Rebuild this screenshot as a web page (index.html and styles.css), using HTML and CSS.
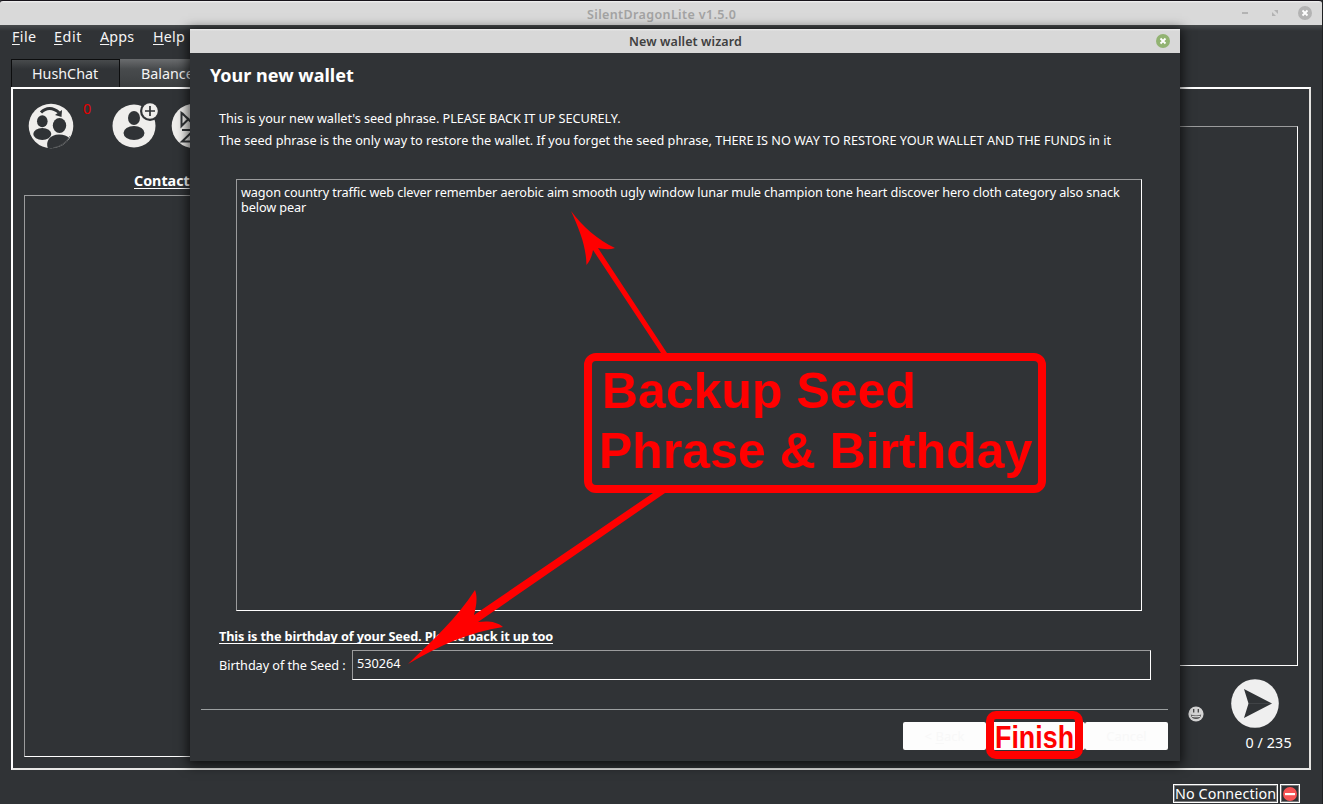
FILE: index.html
```
<!DOCTYPE html>
<html lang="en">
<head>
<meta charset="utf-8">
<title>SilentDragonLite v1.5.0</title>
<link rel="stylesheet" href="styles.css">
</head>
<body>
<div class="desktop">
  <div class="app">
    <header class="titlebar">
      <span class="app-title">SilentDragonLite v1.5.0</span>
      <svg class="win-controls" width="80" height="16" viewBox="0 0 80 16">
        <rect x="10" y="7" width="6" height="2" fill="#b3b3b3"/>
        <path d="M42 5h4v4zM40 7v4h4z" fill="#b3b3b3"/>
        <circle cx="73" cy="8" r="7" fill="#b3b3b3"/>
        <path d="M70.5 5.500l5 5m0-5l-5 5" stroke="#fff" stroke-width="1.800"/>
      </svg>
    </header>
    <nav class="menu">
      <span class="m-file"><u>F</u>ile</span>
      <span class="m-edit"><u>E</u>dit</span>
      <span class="m-apps"><u>A</u>pps</span>
      <span class="m-help"><u>H</u>elp</span>
    </nav>
    <div class="tabs">
      <div class="tab active">HushChat</div>
      <div class="tab second">Balance</div>
    </div>
    <main class="panel">
      <section class="contacts">
        <div class="tools">
          <svg class="ico-group" width="46" height="46" viewBox="0 0 46 46">
            <defs><clipPath id="disc"><circle cx="23" cy="23" r="22.300"/></clipPath></defs>
            <circle cx="23" cy="23" r="22.300" fill="#efeeec"/>
            <g clip-path="url(#disc)" fill="#303336">
              <ellipse cx="14.300" cy="18.300" rx="5.300" ry="6"/>
              <ellipse cx="14.300" cy="31" rx="9" ry="6"/>
              <ellipse cx="31.500" cy="22.500" rx="9" ry="9.500" fill="#efeeec"/>
              <ellipse cx="31.500" cy="22.500" rx="6.700" ry="7.600"/>
              <path d="M20 46c-3-8 2-14.500 11-14.500 5 0 8 1.500 10 3.500L36 46z"/>
            </g>
            <path d="M42 33Q36 43 25 45" fill="none" stroke="#5c5e60" stroke-width=".8"/>
            <path d="M13 9.500C18 4 25 4 31 9.500" fill="none" stroke="#303336" stroke-width="3"/>
            <path d="M27 12l7-5-.5 7z" fill="#303336"/>
          </svg>
          <span class="badge">0</span>
          <svg class="ico-add" width="48" height="48" viewBox="0 0 48 48">
            <circle cx="22" cy="25" r="21.500" fill="#efeeec"/>
            <ellipse cx="22" cy="17" rx="6" ry="7" fill="#303336"/>
            <ellipse cx="22" cy="32" rx="10.500" ry="7" fill="#303336"/>
            <circle cx="38" cy="10" r="10" fill="#303336"/>
            <circle cx="38" cy="10" r="7.800" fill="#efeeec"/>
            <path d="M38 5v10m-5-5h10" stroke="#303336" stroke-width="1.700"/>
          </svg>
          <svg class="ico-wait" width="46" height="46" viewBox="0 0 46 46">
            <circle cx="23" cy="23" r="22.300" fill="#efeeec"/>
            <path d="M10.500 10v13l7-7zM11 10l12 12M11 27h12L11 38.500h12" fill="none" stroke="#303336" stroke-width="2"/>
          </svg>
        </div>
        <h2 class="contact-title">Contact</h2>
        <div class="contact-list"></div>
      </section>
      <section class="chat">
        <div class="chat-log"></div>
        <div class="compose">
          <svg class="emoji" width="16" height="16" viewBox="0 0 16 16">
            <circle cx="8" cy="8" r="7.600" fill="#d4d4d4"/>
            <path d="M5.700 3v3.500m4.600-3.500v3.500" stroke="#444" stroke-width="1.300"/>
            <path d="M2.800 8.500q5.200 2.200 10.400 0-.7 4.500-5.200 4.500t-5.200-4.500z" fill="#555"/>
            <path d="M4 9.700q4 1.300 8 0v1q-4 1.200-8 0z" fill="#eee"/>
          </svg>
          <div class="send-box">
            <svg width="48" height="49" viewBox="0 0 48 49">
              <ellipse cx="24" cy="24.500" rx="23.800" ry="24.300" fill="#efefef"/>
              <path d="M13 10l28 14.500L13 39l4.500-14.500z" fill="#303336"/>
              <path d="M18 24.500h22" stroke="#484b4e" stroke-width=".7"/>
            </svg>
            <span class="count">0 / 235</span>
          </div>
        </div>
      </section>
    </main>
    <footer class="status">
      <span class="conn">No Connection</span>
      <span class="conn-ico"><svg width="14" height="14" viewBox="0 0 14 14"><circle cx="7" cy="7" r="7" fill="#f65355"/><rect x="2" y="6" width="10" height="2.200" fill="#fff"/></svg></span>
    </footer>
  </div>

  <div class="dialog">
    <header class="dialog-bar">
      <span class="dialog-title">New wallet wizard</span>
      <svg class="dialog-close" width="14" height="14" viewBox="0 0 14 14"><circle cx="7" cy="7" r="7" fill="#92b372"/><path d="M4.500 4.500l5 5m0-5l-5 5" stroke="#fff" stroke-width="1.800"/></svg>
    </header>
    <div class="dialog-body">
      <h1 class="heading">Your new wallet</h1>
      <p class="line first">This is your new wallet's seed phrase. PLEASE BACK IT UP SECURELY.</p>
      <p class="line second-line">The seed phrase is the only way to restore the wallet. If you forget the seed phrase, THERE IS NO WAY TO RESTORE YOUR WALLET AND THE FUNDS in it</p>
      <div class="seed">wagon country traffic web clever remember aerobic aim smooth ugly window lunar mule champion tone heart discover hero cloth category also snack below pear</div>
      <p class="bday-title">This is the birthday of your Seed. Please back it up too</p>
      <div class="bday-row">
        <span class="bday-label">Birthday of the Seed :</span>
        <div class="bday-input">530264</div>
      </div>
      <div class="buttons">
        <div class="btn">&lt; <u>B</u>ack</div>
        <div class="btn mid"></div>
        <div class="btn">Cancel</div>
      </div>
    </div>
  </div>

  <svg class="arrows" width="1323" height="804" viewBox="0 0 1323 804">
    <g fill="#f00">
      <path d="M571 211C582 226 598 240 615 248C609 250 603 249 598 248L667 353H661L593 250C592 256 590 261 586.500 265C586 246 580 231 571 211Z"/>
      <path d="M408 664C433 640 457 618 475 590C478 598 476 607 474 615L653 493H665L478 622C487 621 496 621 503 627C470 632 440 645 408 664Z"/>
    </g>
  </svg>
  <div class="callout"><span class="call-a">Backup Seed</span><span class="call-b">Phrase &amp; Birthday</span></div>
  <div class="finish"><span>Finish</span></div>
</div>
</body>
</html>
```

FILE: styles.css
```
* { box-sizing: border-box; }
body { margin: 0; background: #303336; font-family: "Noto Sans", sans-serif; color: #fff; }
h1, h2, p { margin: 0; }
.desktop { position: relative; width: 1323px; height: 804px; overflow: hidden; }
.app { height: 804px; display: flex; flex-direction: column; border-right: 1px solid #1f2123; white-space: nowrap; }

.titlebar { height: 25px; flex: none; border-top: 1px solid #17131a; background: linear-gradient(#f2f2f2 0, #d9d9d9 2px); border-radius: 3px 3px 0 0; display: flex; align-items: center; }
.app-title { flex: 1; padding-left: 587px; font-size: 12.5px; font-weight: 600; line-height: 24px; color: #a3a3a3; padding-top: 3px; letter-spacing: .37px; }
.win-controls { margin-right: 10px; }

.menu { height: 34px; flex: none; display: flex; font-size: 14.3px; line-height: 20px; padding: 2px 0 0 12px; background: linear-gradient(#484b4c, #303336 6px); color: #f5f5f5; letter-spacing: .2px; }
.menu u, .btn u { text-underline-offset: 2px; text-decoration-thickness: 1px; text-decoration-skip-ink: none; }
.m-file { width: 42px; letter-spacing: .4px; }
.m-edit { width: 46px; letter-spacing: .6px; }
.m-apps { width: 53px; }

.tabs { height: 28px; flex: none; display: flex; padding-left: 11px; }
.tab { height: 29px; font-size: 14.3px; line-height: 28px; color: #f4f4f4; }
.active { width: 109px; padding-left: 20px; border: 1px solid #0c0d0e; background: linear-gradient(#484b4d, #303336 9px); }
.second { width: 110px; height: 28px; padding: 1px 0 0 21px; background: linear-gradient(#6a6c6e, #484b4d 10px, #3c3f41); }

.panel { flex: none; margin-left: 11px; width: 1300px; height: 683px; border: 2px solid #fff; border-right-color: #e4e3e0; border-bottom-color: #e8e8e6; display: flex; justify-content: space-between; }
.contacts { width: 280px; padding: 14px 0 0 11px; }
.tools { height: 60px; display: flex; padding-left: 3px; }
.ico-group { margin-left: .5px; }
.badge { color: #e60000; font-size: 14.3px; line-height: 12px; padding-left: 9.500px; width: 38px; }
.ico-add { margin-top: -2px; }
.ico-wait { margin-left: 11.500px; flex: none; }
.contact-title { font-size: 14.3px; line-height: 20px; height: 20px; margin-top: 8px; padding-left: 110px; text-decoration: underline; text-underline-offset: 2px; text-decoration-thickness: 1px; }
.contact-list { margin-top: 4px; height: 562px; border: 1px solid #9b9c9d; border-bottom-color: #fff; }
.chat { width: 500px; padding: 37px 11px 0 0; }
.chat-log { height: 540px; border: 1px solid #9b9c9d; border-right-color: #fff; border-bottom-color: #fff; }
.compose { display: flex; justify-content: flex-end; padding-top: 13px; }
.emoji { margin: 27px 27px 0 0; }
.send-box { width: 67px; display: flex; flex-direction: column; }
.count { font-size: 14.3px; line-height: 20px; padding: 5px 0 0 14.500px; letter-spacing: .1px; }
.status { display: flex; justify-content: flex-end; gap: 2px; padding: 14px 22px 0 0; }
.conn, .conn-ico { height: 19px; border: 1px solid #fff; box-shadow: inset 0 0 0 1px #77797a; }
.conn { width: 105px; font-size: 14.3px; line-height: 18px; padding-left: 1px; letter-spacing: .1px; }
.conn-ico { width: 20px; display: flex; align-items: center; justify-content: center; }

.dialog { position: absolute; left: 190px; top: 29px; width: 990px; height: 732px; background: #303336; box-shadow: 0 2px 11px 2px rgba(0,0,0,.72); }
.dialog-bar { height: 24px; background: linear-gradient(#efefef 0, #d8d8d8 2px); display: flex; align-items: center; }
.dialog-title { flex: 1; padding-left: 439px; color: #404040; font-weight: 600; font-size: 12.5px; line-height: 24px; padding-top: 2px; letter-spacing: .1px; }
.dialog-close { margin-right: 10px; }
.dialog-body { padding: 0 12px 0 11px; height: 708px; display: flex; flex-direction: column; }
.heading { margin-top: 10px; padding-left: 9px; font-size: 18px; line-height: 24px; }
.line { font-size: 12.7px; line-height: 22px; padding-left: 18px; white-space: nowrap; }
.first { margin-top: 20px; letter-spacing: -.048px; }
.second-line { letter-spacing: -.019px; }
.seed { margin: 28px 26px 0 35px; height: 432px; border: 1px solid #9b9c9d; border-right-color: #fff; border-bottom-color: #fff; padding: 5px 4px; font-size: 12.7px; line-height: 15px; letter-spacing: -.109px; }
.bday-title { margin: 15px 0 0 18px; height: 24px; font-size: 12.7px; font-weight: 700; line-height: 20px; letter-spacing: -.125px; text-decoration: underline; text-decoration-skip-ink: none; text-decoration-thickness: 1px; text-underline-offset: 2px; }
.bday-row { display: flex; font-size: 12.7px; line-height: 30px; padding-left: 18px; }
.bday-label { width: 133px; letter-spacing: -.06px; }
.bday-input { width: 799px; height: 30px; border: 1px solid #9b9c9d; border-right-color: #fff; border-bottom-color: #fff; padding-left: 4px; line-height: 25px; }
.buttons { margin-top: 29px; border-top: 1px solid #9b9fa0; padding-top: 12px; display: flex; justify-content: flex-end; }
.btn { width: 83px; height: 28px; background: #fdfdfd; border-radius: 2px; color: #f8f8f8; font-size: 13px; line-height: 28px; text-align: center; }
.mid { width: 99px; }

.arrows { position: absolute; left: 0; top: 0; }
.callout { position: absolute; left: 584px; top: 353px; width: 462px; height: 140px; border: 8px solid #f00; border-radius: 12px; color: #f00; font: bold 50px/60px "Liberation Sans", sans-serif; display: flex; flex-direction: column; white-space: nowrap; }
.call-a { padding-left: 10px; }
.call-b { padding-left: 7px; }
.finish { position: absolute; left: 986px; top: 711px; width: 97px; height: 48px; border: 8px solid #f00; border-radius: 10px; color: #f00; font: bold 30.500px/36px "Liberation Sans", sans-serif; padding-left: 1px; }
.finish span { display: inline-block; transform: scaleX(.88); transform-origin: left; }
```
